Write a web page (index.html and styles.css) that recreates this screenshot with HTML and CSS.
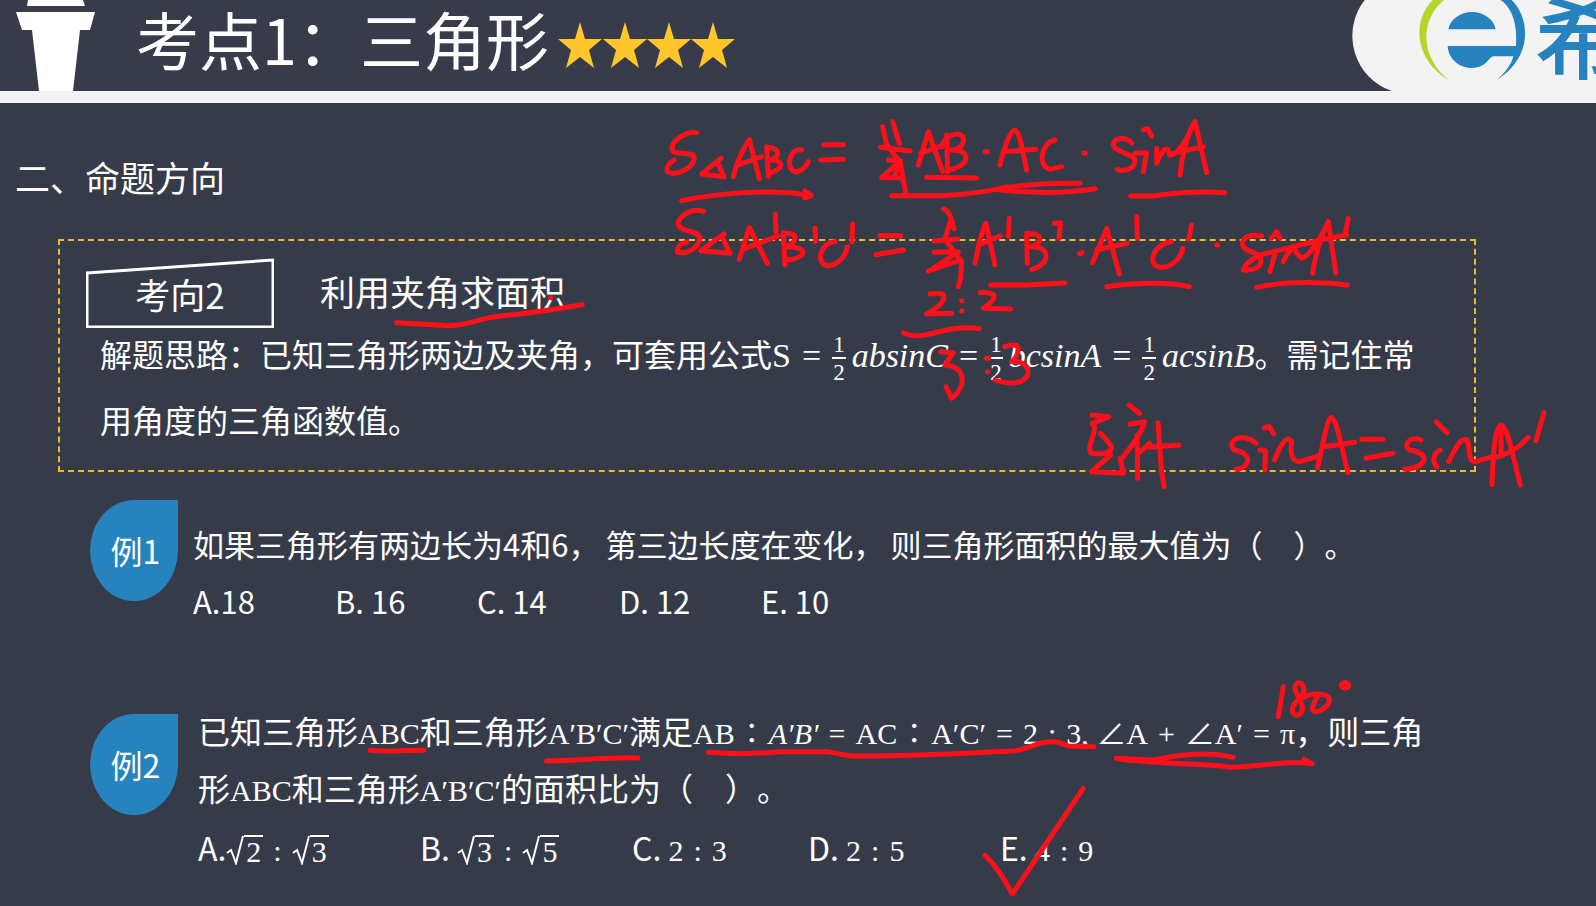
FILE: index.html
```html
<!DOCTYPE html>
<html lang="zh-CN">
<head>
<meta charset="utf-8">
<title>考点1：三角形</title>
<link rel="stylesheet" href="styles.css">
</head>
<body>
<div class="slide">
  <header class="top">
    <svg class="torch" viewBox="0 0 79 91" aria-hidden="true"><path d="M12 0H67L69 6H11ZM0 12H79L74 30H64L57 91H23L16 30H6Z"/></svg>
    <h1 class="title">考点1：三角形</h1>
    <svg class="stars" viewBox="0 0 178 46" role="img" aria-label="四星">
      <defs><path id="star" d="M22 0L27 17H44L31 28L36 46L22 35L8 46L13 28L0 17H17Z"/></defs>
      <use href="#star"/><use href="#star" x="45"/><use href="#star" x="89"/><use href="#star" x="133"/>
    </svg>
    <div class="brand">
      <svg class="mark" viewBox="66 0 564 273" aria-hidden="true">
        <path class="paper" d="M104 0A175 175 0 0 0 185 273H632V0Z"/>
        <path class="green" d="M309 0C250 55 245 175 360 243C270 175 268 60 342 0Z"/>
        <path class="blue" d="M355 88A72 62 0 0 1 497 88ZM353 138H558C562 70 547 25 512 0H545C602 55 608 175 500 240C530 215 545 190 550 169H490C474 172 472 203 426 204C385 204 355 175 353 138Z"/>
      </svg>
      <span class="brand-name">希</span>
    </div>
  </header>

  <main class="content">
    <h2 class="section">二、命题方向</h2>

    <section class="direction">
      <div class="direction-head">
        <div class="tag">
          <svg class="tag-frame" viewBox="0 0 188 70" aria-hidden="true"><path d="M1 15L187 2V69H1Z"/></svg>
          <span class="tag-text">考向2</span>
        </div>
        <h3 class="direction-title">利用夹角求面积</h3>
      </div>
      <p class="method">解题思路：已知三角形两边及夹角，可套用公式<span class="m">S<span class="op">=</span><span class="frac"><span>1</span><span class="den">2</span></span><i>absinC</i><span class="op">=</span><span class="frac"><span>1</span><span class="den">2</span></span><i>bcsinA</i><span class="op">=</span><span class="frac"><span>1</span><span class="den">2</span></span><i>acsinB</i></span>。需记住常用角度的三角函数值。</p>
    </section>

    <section class="example">
      <div class="leaf">例1</div>
      <div class="body first">
        <p class="stem"><span class="clause">如果三角形有两边长为4和6，</span><span class="clause">第三边长度在变化，</span><span class="clause">则三角形面积的最大值为（&emsp;）。</span></p>
        <ul class="options even">
          <li>A.18</li><li>B. 16</li><li>C. 14</li><li>D. 12</li><li>E. 10</li>
        </ul>
      </div>
    </section>

    <section class="example second">
      <div class="leaf">例2</div>
      <div class="body">
        <p class="stem">已知三角形<span class="m">ABC</span>和三角形<span class="m">A′B′C′</span>满足<span class="m">AB<span class="ratio">∶</span><i>A′B′</i><span class="op">=</span>AC<span class="ratio">∶</span>A′C′<span class="op">=</span>2<span class="colon">:</span>3, ∠A<span class="op">+</span>∠A′<span class="op">=</span>π</span>，则三角形<span class="m">ABC</span>和三角形<span class="m">A′B′C′</span>的面积比为（&emsp;）。</p>
        <ul class="options varied">
          <li>A.<span class="m"><span class="root"><svg viewBox="0 0 18 30" aria-hidden="true"><path d="M1 18L5 15L10 28L17 1"/></svg><span>2</span></span><span class="colon">:</span><span class="root"><svg viewBox="0 0 18 30" aria-hidden="true"><path d="M1 18L5 15L10 28L17 1"/></svg><span>3</span></span></span></li>
          <li>B. <span class="m"><span class="root"><svg viewBox="0 0 18 30" aria-hidden="true"><path d="M1 18L5 15L10 28L17 1"/></svg><span>3</span></span><span class="colon">:</span><span class="root"><svg viewBox="0 0 18 30" aria-hidden="true"><path d="M1 18L5 15L10 28L17 1"/></svg><span>5</span></span></span></li>
          <li>C. <span class="m">2<span class="colon">:</span>3</span></li>
          <li>D. <span class="m">2<span class="colon">:</span>5</span></li>
          <li>E. <span class="m">4<span class="colon">:</span>9</span></li>
        </ul>
      </div>
    </section>
  </main>

  <svg class="ink" viewBox="0 0 1596 906" preserveAspectRatio="xMinYMin meet" aria-hidden="true">
    <g transform="translate(650 110) scale(.33333)">
      <path d="M140 68C105 62 62 95 66 120C75 138 130 120 133 145C128 175 80 200 52 185C48 172 58 158 72 150M213 145L155 192L222 200L203 158M250 200C260 150 290 100 298 88L328 206M262 165L335 140M350 110L355 200M350 112C395 115 390 140 360 150C408 150 400 180 355 190M455 120C415 110 405 185 440 185C460 182 470 165 475 155M522 104H580M512 150L580 148M95 272C200 250 360 235 480 256M465 243L484 256L465 264"/>
      <path d="M698 50L710 105L750 155L767 248M728 35L748 100M692 112L780 123M715 150L752 152L695 203H760M750 155L735 195M805 165L835 65L878 185M812 130L880 105M890 75L893 185M875 110C890 60 950 65 940 95C935 115 915 120 900 120C965 115 965 170 893 180M830 202L980 204M1005 125H1012M725 257H880C1000 250 1050 235 1070 232"/>
      <path d="M160 304C125 290 78 325 85 345C95 368 148 360 150 385C145 415 110 435 82 426C80 410 92 400 110 397M222 372L152 422L240 430L218 385M268 448L298 352L352 460M285 415L385 378M376 312L378 365M400 368L405 465M400 370C450 365 440 395 410 410C480 410 470 445 410 450M495 355L497 395M555 395C510 395 495 465 535 467C570 465 590 430 592 410M608 342L606 395M690 377H752M678 434L760 420"/>
      <path d="M880 297C897 297 908 335 912 357M900 335L885 388L935 455M852 393L923 387M852 427L925 425L850 475M932 450L835 483M935 452L932 505L925 530M975 460C985 410 1000 350 1008 340L1035 465M985 405L1050 378M1078 325L1075 378"/>
      <path d="M840 552C900 540 895 575 830 612L905 610M935 572H936M935 603H936M990 548C1055 545 1035 570 1000 595L1082 597M760 668C820 700 880 640 988 656M872 725L910 728L885 765C950 770 950 830 905 865L888 830M1010 745H1016M1012 785H1014M1065 710C1125 690 1105 740 1085 755C1140 750 1150 800 1110 815C1080 825 1050 815 1035 810"/>
    </g>
    <g transform="translate(1000 110) scale(.33333)">
      <path d="M0 165C10 120 30 60 45 60C60 70 65 110 80 180M10 125L108 118M165 90C125 95 110 170 150 178L185 170M0 240C100 250 200 250 285 236M20 232C100 222 180 218 240 220M251 130H256M395 100C380 75 330 85 342 110C350 125 410 135 405 155C400 180 370 185 352 178M430 60L443 56L455 78M405 130L440 128L430 185M470 115V160C480 130 505 95 508 135C530 140 560 90 585 35M540 195C545 140 565 60 585 35L620 188M520 130L610 110M392 258H460C540 248 600 242 675 248"/>
      <path d="M80 370L82 460M80 372C130 365 130 400 95 410C155 410 150 465 95 478M163 340L182 338L177 385M-28 525H80L195 519M238 432L246 428M278 458L320 355L358 492M290 420L382 400M410 320L412 385M515 395C460 400 435 470 485 472C520 470 545 440 548 415M575 345L566 388M320 530C400 520 500 515 568 530M650 405H653M785 378C720 365 710 415 755 425C800 440 790 485 730 480C735 460 760 445 780 435L960 390L1040 375M815 385L830 365L840 385M825 430L810 485M850 455C860 430 885 400 890 430L905 445C925 440 960 390 985 335M938 490C945 440 965 370 985 335L1008 490M1045 325L1035 375M770 532C850 515 950 515 1042 525"/>
    </g>
    <g transform="translate(40 230) scale(.35714 .33333)">
      <path d="M998 278L1150 287C1200 285 1230 265 1290 258C1370 250 1440 238 1518 224M1429 203H1430"/>
    </g>
    <g transform="translate(1060 390) scale(.33801 .33333)">
      <path d="M95 75L145 80L95 100C120 110 70 180 95 190C140 195 160 180 150 165L120 130M150 195L92 245L188 250L178 205M205 45L235 70M207 103L250 95C240 140 200 180 180 210M228 135L230 265M232 190L265 160M290 98L300 240L308 290M262 172L352 165"/>
      <path d="M580 160C540 125 490 150 515 180C575 190 560 235 522 238M605 115L618 108L632 132M592 180L608 182L606 240M635 210C650 170 670 130 685 155C680 200 690 215 710 215L765 198M762 232C775 180 790 85 802 82C820 90 830 160 852 248M780 170L872 157M893 148H955M905 205L985 190M1068 150C1040 135 1010 165 1035 180C1100 190 1085 235 1020 238M1113 95L1145 128M1125 180C1105 190 1100 215 1115 230M1150 215C1165 190 1180 140 1205 150C1215 180 1205 215 1230 215L1280 200M1278 285C1280 220 1285 105 1305 105C1325 110 1340 200 1362 285M1305 110V190M1280 205C1340 190 1370 160 1385 142M1432 68L1408 152"/>
    </g>
    <g transform="translate(80 680) scale(.44643 .33333)">
      <path d="M650 211C690 218 730 208 770 211M1045 243C1120 243 1180 230 1250 234"/>
    </g>
    <g transform="translate(700 670) scale(.47194 .33333)">
      <path d="M18 247C90 255 120 250 170 245H270L320 258C450 260 550 250 670 242C710 230 720 210 760 217L780 228L835 230M882 265L960 270C1050 245 1090 250 1130 262M890 268C1000 285 1080 280 1125 292C1190 290 1240 270 1297 281M1280 268L1297 281M604 556C630 590 645 630 662 672L812 355"/>
    </g>
    <g transform="translate(1230 670) scale(.33333)">
      <path d="M160 50L145 140M222 55C215 25 190 40 195 60C205 85 230 115 210 132C190 145 180 120 195 100C210 85 225 70 222 55M212 88C240 65 290 70 298 85C300 110 265 128 252 125C240 115 255 95 262 80M334 46A10 8 0 1 0 356 46A10 8 0 1 0 334 46"/>
    </g>
  </svg>
</div>
</body>
</html>
```

FILE: styles.css
```css
* { box-sizing: border-box; }

body {
  margin: 0;
  background: #363b49;
  color: #fff;
  font-family: "Noto Sans CJK SC", sans-serif;
  text-spacing-trim: space-all;
}

h1, h2, h3, p, ul { margin: 0; padding: 0; font-weight: 400; }
ul { list-style: none; }

.slide {
  position: relative;
  min-height: 100vh;
  overflow: hidden;
}

.top {
  display: flex;
  align-items: flex-start;
  height: 103px;
  padding-left: 16px;
  border-bottom: 12px solid #f3f3f3;
  background: #383b4a;
}

.torch { width: 79px; height: 91px; flex: none; fill: #fff; }

.title {
  margin-left: 41px;
  font-size: 63px;
  line-height: 76px;
  white-space: nowrap;
}

.stars { width: 178px; height: 46px; margin: 22px 0 0 9px; flex: none; fill: #ffc72c; }

.brand {
  display: flex;
  width: 244px;
  height: 91px;
  margin-left: auto;
  overflow: hidden;
  flex: none;
}

.mark { width: 188px; height: 91px; flex: none; }
.paper { fill: #f3f3f3; }
.green { fill: #b5d52b; }
.blue { fill: #2783bd; }

.brand-name {
  background: #f3f3f3;
  color: #2783bd;
  font-size: 88px;
  line-height: 66px;
  -webkit-text-stroke: 2px #2783bd;
  margin-left: -4px;
  height: 91px;
}

.content { padding: 52px 0 24px; }

.section {
  padding-left: 15px;
  font-size: 35px;
  line-height: 44px;
}

.direction {
  margin: 40px 120px 0 58px;
  padding: 17px 30px 18px 26px;
  border: 2px dashed #e9b92f;
}

.direction-head { display: flex; align-items: flex-start; gap: 46px; }

.tag {
  display: grid;
  width: 188px;
  height: 70px;
}

.tag-frame { grid-area: 1 / 1; width: 188px; height: 70px; fill: none; stroke: #fff; stroke-width: 3; }

.tag-text {
  grid-area: 1 / 1;
  align-self: start;
  justify-self: center;
  font-size: 35px;
  line-height: 72px;
}

.direction-title { font-size: 35px; line-height: 66px; }

.method {
  margin: -8px 0 0 14px;
  font-size: 32px;
  line-height: 66px;
}

.m { font-family: "Liberation Serif", "Noto Sans CJK SC", serif; line-height: 1; }
.method .m { font-size: 34px; }
.op { margin: 0 11px; }

.frac {
  display: inline-flex;
  flex-direction: column;
  margin-right: 6px;
  font-size: 23px;
  line-height: 24px;
  text-align: center;
  vertical-align: middle;
}

.den { border-top: 2px solid #fff; padding: 2px 1px 0; }

.example {
  display: flex;
  align-items: flex-start;
  margin: 28px 150px 0 90px;
}

.leaf {
  flex: none;
  width: 88px;
  height: 101px;
  padding-left: 3px;
  border-radius: 50% 0 50% 50%;
  background: #2783bd;
  font-size: 32px;
  line-height: 100px;
  text-align: center;
}

.body { flex: 1; margin-left: 20px; font-size: 32px; line-height: 57px; }
.first { margin-left: 15px; padding-top: 15px; font-size: 31px; }
.clause { margin-right: 6px; }
.second { margin-top: 73px; }
.second .leaf { margin-top: 12px; }
.second .m { font-size: 30px; }
.second .op { margin: 0 10px; }

.options { display: grid; }
.even { grid-template-columns: repeat(5, 142px); }
.varied { grid-template-columns: 222px 212px 176px 192px 1fr; margin-top: 3px; }

.colon { margin: 0 10px; }
.ratio { display: inline-block; width: 34px; text-align: center; }

.root { display: inline-flex; align-items: flex-start; line-height: 30px; vertical-align: -4px; }
.root svg { width: 18px; height: 30px; fill: none; stroke: #fff; stroke-width: 2; }
.root span { padding: 0 2px; border-top: 2px solid #fff; }

.ink {
  position: absolute;
  top: 0;
  left: 0;
  width: 100%;
  pointer-events: none;
}

.ink path {
  fill: none;
  stroke: #ff0f1a;
  stroke-width: 5;
  stroke-linecap: round;
  stroke-linejoin: round;
  vector-effect: non-scaling-stroke;
}
```
